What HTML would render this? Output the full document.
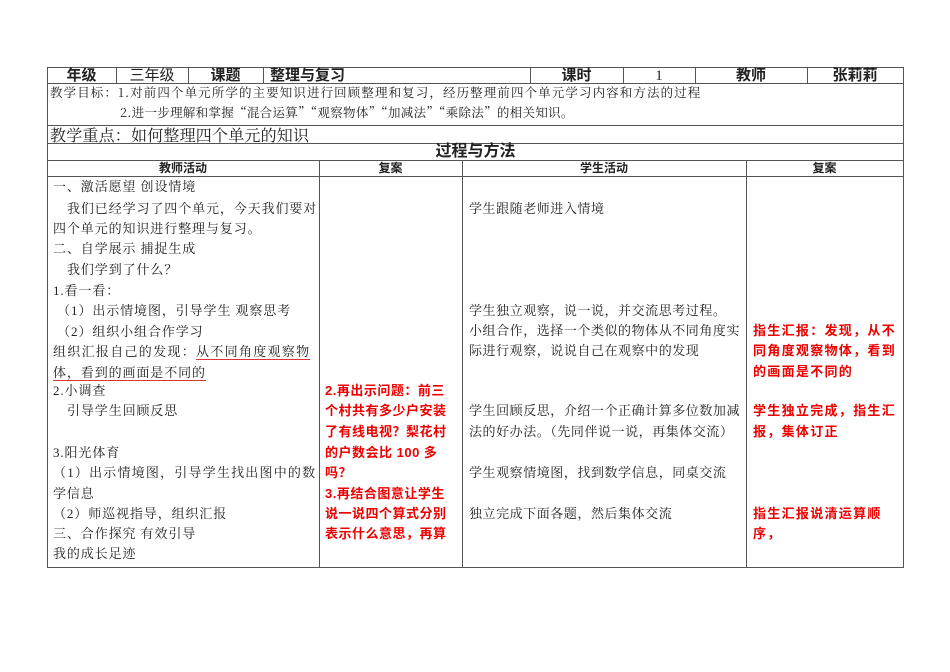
<!DOCTYPE html>
<html><head><meta charset="utf-8">
<style>
body{margin:0;width:950px;height:672px;background:#fff;position:relative;overflow:hidden;font-family:"Liberation Serif","Noto Serif CJK SC",serif;color:#222}
.h{position:absolute;background:#555;height:1px}
.v{position:absolute;background:#555;width:1px}
.t{position:absolute;white-space:nowrap;font-size:13px;line-height:16px}
.hd{position:absolute;font-family:"Liberation Sans","Noto Sans CJK SC",sans-serif;font-weight:bold;font-size:15px;line-height:16px;text-align:center;white-space:nowrap}
.c1{letter-spacing:0.9px}
.c3{letter-spacing:0.55px}
.r{color:#e00;font-weight:bold;font-family:"Liberation Sans","Noto Sans CJK SC",sans-serif;letter-spacing:0.5px}
.r4{color:#e00;font-weight:bold;font-family:"Liberation Sans","Noto Sans CJK SC",sans-serif;letter-spacing:1.3px}
.sh{position:absolute;font-family:"Liberation Sans","Noto Sans CJK SC",sans-serif;font-weight:bold;font-size:12px;text-align:center;line-height:14px}
.ob{font-family:"Noto Serif CJK SC","Liberation Serif",serif;font-size:12.5px;letter-spacing:1.1px}
</style></head><body>
<div class="h" style="left:47px;top:67px;width:857px"></div>
<div class="h" style="left:47px;top:83px;width:857px"></div>
<div class="h" style="left:47px;top:125px;width:857px"></div>
<div class="h" style="left:47px;top:143px;width:857px"></div>
<div class="h" style="left:47px;top:160px;width:857px"></div>
<div class="h" style="left:47px;top:176px;width:857px"></div>
<div class="h" style="left:47px;top:567px;width:857px"></div>
<div class="v" style="left:47px;top:67px;height:501px"></div>
<div class="v" style="left:903px;top:67px;height:501px"></div>
<div class="v" style="left:116px;top:67px;height:16px"></div>
<div class="v" style="left:188px;top:67px;height:16px"></div>
<div class="v" style="left:263px;top:67px;height:16px"></div>
<div class="v" style="left:530px;top:67px;height:16px"></div>
<div class="v" style="left:623px;top:67px;height:16px"></div>
<div class="v" style="left:695px;top:67px;height:16px"></div>
<div class="v" style="left:807px;top:67px;height:16px"></div>
<div class="v" style="left:319px;top:160px;height:407px"></div>
<div class="v" style="left:462px;top:160px;height:407px"></div>
<div class="v" style="left:746px;top:160px;height:407px"></div>
<div class="hd" style="left:47px;top:68px;width:69px">年级</div>
<div class="hd" style="left:116px;top:68px;width:72px;font-weight:normal">三年级</div>
<div class="hd" style="left:188px;top:68px;width:75px">课题</div>
<div class="hd" style="left:270px;top:68px;text-align:left">整理与复习</div>
<div class="hd" style="left:530px;top:68px;width:93px">课时</div>
<div class="hd" style="left:623px;top:68px;width:72px;font-weight:normal;font-family:'Liberation Serif',serif">1</div>
<div class="hd" style="left:695px;top:68px;width:112px">教师</div>
<div class="hd" style="left:807px;top:68px;width:96px">张莉莉</div>
<div class="t ob" style="left:50px;top:84px">教学目标：1.对前四个单元所学的主要知识进行回顾整理和复习，经历整理前四个单元学习内容和方法的过程</div>
<div class="t ob" style="left:120px;top:104px;letter-spacing:0.3px">2.进一步理解和掌握“混合运算”“观察物体”“加减法”“乘除法”的相关知识。</div>
<div class="t" style="left:50px;top:126px;font-size:16px;line-height:17px;font-family:'Noto Serif CJK SC',serif;letter-spacing:0.2px">教学重点：如何整理四个单元的知识</div>
<div class="hd" style="left:47px;top:143px;width:857px;font-size:16px;line-height:17px">过程与方法</div>
<div class="sh" style="left:47px;top:161px;width:272px">教师活动</div>
<div class="sh" style="left:319px;top:161px;width:143px">复案</div>
<div class="sh" style="left:462px;top:161px;width:284px">学生活动</div>
<div class="sh" style="left:746px;top:161px;width:157px">复案</div>
<div class="t c1" style="left:53px;top:179px">一、激活愿望 创设情境</div>
<div class="t c1" style="left:67px;top:201px">我们已经学习了四个单元，今天我们要对</div>
<div class="t c1" style="left:53px;top:221px">四个单元的知识进行整理与复习。</div>
<div class="t c1" style="left:53px;top:241px">二、自学展示 捕捉生成</div>
<div class="t c1" style="left:67px;top:262px">我们学到了什么？</div>
<div class="t c1" style="left:53px;top:283px">1.看一看：</div>
<div class="t c1" style="left:53px;top:303px">&nbsp;（1）出示情境图，引导学生 观察思考</div>
<div class="t c1" style="left:53px;top:324px">&nbsp;（2）组织小组合作学习</div>
<div class="t c1" style="left:53px;top:344px;letter-spacing:1.3px">组织汇报自己的发现：<span style="border-bottom:1px solid #d33">从不同角度观察物</span></div>
<div class="t c1" style="left:53px;top:365px"><span style="border-bottom:1px solid #d33">体，看到的画面是不同的</span></div>
<div class="t c1" style="left:53px;top:383px">2.小调查</div>
<div class="t c1" style="left:67px;top:403px">引导学生回顾反思</div>
<div class="t c1" style="left:53px;top:445px">3.阳光体育</div>
<div class="t c1" style="left:53px;top:465px;letter-spacing:1.2px">（1）出示情境图，引导学生找出图中的数</div>
<div class="t c1" style="left:53px;top:486px">学信息</div>
<div class="t c1" style="left:53px;top:506px">（2）师巡视指导，组织汇报</div>
<div class="t c1" style="left:53px;top:526px">三、合作探究 有效引导</div>
<div class="t c1" style="left:53px;top:546px">我的成长足迹</div>
<div class="t r" style="left:325px;top:383px">2.再出示问题：前三</div>
<div class="t r" style="left:325px;top:403px">个村共有多少户安装</div>
<div class="t r" style="left:325px;top:424px">了有线电视？梨花村</div>
<div class="t r" style="left:325px;top:445px">的户数会比 100 多</div>
<div class="t r" style="left:325px;top:465px">吗？</div>
<div class="t r" style="left:325px;top:486px">3.再结合图意让学生</div>
<div class="t r" style="left:325px;top:506px">说一说四个算式分别</div>
<div class="t r" style="left:325px;top:526px">表示什么意思，再算</div>
<div class="t c3" style="left:469px;top:201px">学生跟随老师进入情境</div>
<div class="t c3" style="left:469px;top:303px">学生独立观察，说一说，并交流思考过程。</div>
<div class="t c3" style="left:469px;top:323px">小组合作，选择一个类似的物体从不同角度实</div>
<div class="t c3" style="left:469px;top:343px">际进行观察，说说自己在观察中的发现</div>
<div class="t c3" style="left:469px;top:403px">学生回顾反思，介绍一个正确计算多位数加减</div>
<div class="t c3" style="left:469px;top:424px">法的好办法。（先同伴说一说，再集体交流）</div>
<div class="t c3" style="left:469px;top:465px">学生观察情境图，找到数学信息，同桌交流</div>
<div class="t c3" style="left:469px;top:506px">独立完成下面各题，然后集体交流</div>
<div class="t r4" style="left:753px;top:323px">指生汇报：发现，从不</div>
<div class="t r4" style="left:753px;top:343px">同角度观察物体，看到</div>
<div class="t r4" style="left:753px;top:364px">的画面是不同的</div>
<div class="t r4" style="left:753px;top:403px">学生独立完成，指生汇</div>
<div class="t r4" style="left:753px;top:424px">报，集体订正</div>
<div class="t r4" style="left:753px;top:506px">指生汇报说清运算顺</div>
<div class="t r4" style="left:753px;top:526px">序，</div>
</body></html>
